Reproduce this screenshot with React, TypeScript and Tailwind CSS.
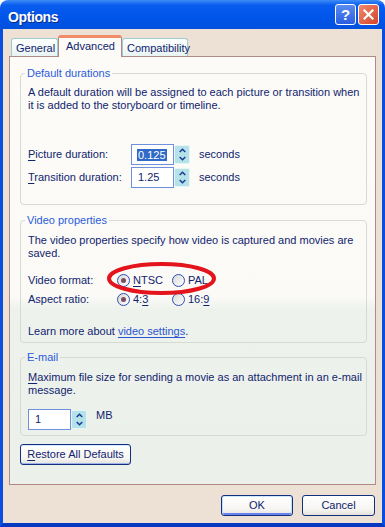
import React from "react";

function U({ children }: { children: React.ReactNode }) {
  return <span className="underline decoration-1 underline-offset-[2px]">{children}</span>;
}

function Spin() {
  return (
    <div className="flex h-[19px] w-[16px] flex-col rounded-[2px] border border-[#E6F5F7] bg-[#B5E1E8]">
      <div className="flex flex-1 items-center justify-center">
        <svg width="7" height="5" viewBox="0 0 7 5">
          <path d="M0.7 4L3.5 1.2L6.3 4" fill="none" stroke="#173C95" strokeWidth="1.5" />
        </svg>
      </div>
      <div className="flex flex-1 items-center justify-center">
        <svg width="7" height="5" viewBox="0 0 7 5">
          <path d="M0.7 1L3.5 3.8L6.3 1" fill="none" stroke="#173C95" strokeWidth="1.5" />
        </svg>
      </div>
    </div>
  );
}

function Field({ children }: { children: React.ReactNode }) {
  return (
    <div className="flex h-[21px] w-[43px] items-center border border-[#7090DD] bg-white pl-[5px]">
      {children}
    </div>
  );
}

function Radio({ checked }: { checked?: boolean }) {
  return (
    <span className="flex h-[13px] w-[13px] items-center justify-center rounded-full border border-[#2B4FB8] bg-[linear-gradient(135deg,#d8d8d2,#ffffff)]">
      {checked && <span className="h-[5px] w-[5px] rounded-full bg-[#7D4B63]" />}
    </span>
  );
}

export default function App() {
  return (
    <div className="relative flex h-[527px] w-[385px] flex-col font-[family-name:Liberation_Sans,Arial,sans-serif] text-[11px] leading-[13px] text-[#10246E]">
      {/* Title bar */}
      <div className="flex h-[29px] shrink-0 items-center justify-between rounded-t-[8px] bg-[linear-gradient(to_bottom,#3d8cf5_0%,#0a5cf0_18%,#0055ea_60%,#0350dc_100%)] pl-[8px] pr-[6px]">
        <span className="pt-[4px] text-[14px] font-bold leading-[16px] tracking-[-0.4px] text-white [text-shadow:1px_1px_0_#0a2a8a]">
          Options
        </span>
        <div className="flex gap-[2px]">
          <div className="flex h-[21px] w-[21px] items-center justify-center rounded-[3px] border border-white bg-[linear-gradient(to_bottom,#5b8cf0,#2a5ee0)] text-[15px] font-bold leading-none text-white">
            ?
          </div>
          <div className="flex h-[21px] w-[21px] items-center justify-center rounded-[3px] border border-white bg-[linear-gradient(135deg,#f08a6a,#d6432a)]">
            <svg width="11" height="11" viewBox="0 0 11 11">
              <path d="M1.5 1.5L9.5 9.5M9.5 1.5L1.5 9.5" stroke="white" strokeWidth="2.2" strokeLinecap="square" />
            </svg>
          </div>
        </div>
      </div>

      {/* Body */}
      <div className="flex flex-1 flex-col border-x-[3px] border-b-[4px] border-x-[#0a4ee0] border-b-[#0638c0] bg-[#EDE0D5] pl-[6px] pr-[6px] pt-[6px]">
        {/* Tabs */}
        <div className="flex h-[21px] items-end pl-[2px]">
          <div className="h-[18px] w-[47px] rounded-t-[3px] border border-b-0 border-[#A3CACB] bg-[linear-gradient(to_bottom,#ffffff,#e8f4f2)] pl-[4px] pt-[3px]">
            General
          </div>
          <div className="relative z-10 -mb-[1px] h-[22px] w-[64px] rounded-t-[3px] border-x border-t-[3px] border-x-[#B08A84] border-t-[#F28B68] bg-[#FCFBF8] pl-[7px] pt-[2px]">
            Advanced
          </div>
          <div className="h-[18px] w-[66px] rounded-t-[3px] border border-b-0 border-[#A3CACB] bg-[linear-gradient(to_bottom,#ffffff,#e8f4f2)] pl-[4px] pt-[3px]">
            Compatibility
          </div>
        </div>

        {/* Panel */}
        <div className="flex h-[429px] flex-col border border-[#B08A84] bg-[linear-gradient(to_bottom,#fcfbf8_0%,#fbfaf6_56%,#eef2ed_59%,#ecf0ea_100%)] pl-[10px] pr-[8px] pt-[10px]">
          {/* Default durations */}
          <fieldset className="rounded-[4px] border border-[#D5DBD2] pb-[16px] pl-[7px]">
            <legend className="-ml-[3px] px-[2px] text-[#2A5BDA]">Default durations</legend>
            <p className="mt-[6px]">
              A default duration will be assigned to each picture or transition when
              <br />
              it is added to the storyboard or timeline.
            </p>
            <div className="mt-[32px] flex h-[21px] items-center">
              <span className="w-[103px]">
                <U>P</U>icture duration:
              </span>
              <Field>
                <span className="bg-[#3169C6] px-[1px] leading-[12px] text-white">0.125</span>
              </Field>
              <Spin />
              <span className="ml-[9px]">seconds</span>
            </div>
            <div className="mt-[2px] flex h-[21px] items-center">
              <span className="w-[103px]">
                <U>T</U>ransition duration:
              </span>
              <Field>
                <span className="px-[1px]">1.25</span>
              </Field>
              <Spin />
              <span className="ml-[9px]">seconds</span>
            </div>
          </fieldset>

          {/* Video properties */}
          <fieldset className="mt-[9px] rounded-[4px] border border-[#D5DBD2] pb-[4px] pl-[7px]">
            <legend className="-ml-[3px] px-[2px] text-[#2A5BDA]">Video properties</legend>
            <p className="mt-[7px]">
              The video properties specify how video is captured and movies are
              <br />
              saved.
            </p>
            <div className="mt-[11px] flex h-[19px] items-center">
              <span className="w-[89px]">Video format:</span>
              <div className="flex w-[55px] items-center gap-[3px]">
                <Radio checked />
                <span>
                  <U>N</U>TSC
                </span>
              </div>
              <div className="flex items-center gap-[3px]">
                <Radio />
                <span>
                  PA<U>L</U>
                </span>
              </div>
            </div>
            <div className="flex h-[19px] items-center">
              <span className="w-[89px]">Aspect ratio:</span>
              <div className="flex w-[55px] items-center gap-[3px]">
                <Radio checked />
                <span>
                  4:<U>3</U>
                </span>
              </div>
              <div className="flex items-center gap-[3px]">
                <Radio />
                <span>
                  16:<U>9</U>
                </span>
              </div>
            </div>
            <p className="mt-[16px]">
              Learn more about <span className="text-[#2A55D0] underline decoration-1 underline-offset-[2px]">video settings</span>.
            </p>
          </fieldset>

          {/* E-mail */}
          <fieldset className="mt-[8px] rounded-[4px] border border-[#D5DBD2] pb-[5px] pl-[7px]">
            <legend className="-ml-[3px] px-[2px] text-[#2A5BDA]">E-mail</legend>
            <p className="mt-[7px]">
              <U>M</U>aximum file size for sending a movie as an attachment in an e-mail
              <br />
              message.
            </p>
            <div className="mt-[12px] flex items-start">
              <Field>
                <span className="px-[1px]">1</span>
              </Field>
              <div className="mt-[1px]">
                <Spin />
              </div>
              <span className="ml-[9px]">MB</span>
            </div>
          </fieldset>

          <button className="mt-[8px] h-[21px] w-[111px] rounded-[3px] border border-[#12307E] bg-[linear-gradient(to_bottom,#ffffff_0%,#f6f5f2_70%,#e4e2dc_100%)] text-center text-[#10246E] shadow-[inset_0_1px_0_#d6e8ff,inset_0_-1px_0_#9fb2ec]">
            <U>R</U>estore All Defaults
          </button>
        </div>

        {/* Bottom buttons */}
        <div className="mt-[10px] flex justify-end gap-[9px] pr-[1px]">
          <button className="h-[21px] w-[72px] rounded-[3px] border border-[#12307E] bg-[linear-gradient(to_bottom,#ffffff_0%,#f6f5f2_70%,#e4e2dc_100%)] text-center text-[#10246E] shadow-[inset_0_1px_0_#cee7ff,inset_1px_0_0_#bfe0f8,inset_-1px_0_0_#bfe0f8,inset_0_-2px_0_#6982ee]">
            OK
          </button>
          <button className="h-[21px] w-[73px] rounded-[3px] border border-[#12307E] bg-[linear-gradient(to_bottom,#ffffff_0%,#f6f5f2_70%,#e4e2dc_100%)] text-center text-[#10246E]">
            Cancel
          </button>
        </div>
      </div>

      {/* Red annotation ellipse */}
      <svg className="pointer-events-none absolute left-[105px] top-[260px]" width="114" height="38" viewBox="0 0 114 38">
        <ellipse cx="56.5" cy="18.5" rx="52.5" ry="14.5" fill="none" stroke="#E3141B" strokeWidth="4" />
      </svg>
    </div>
  );
}
